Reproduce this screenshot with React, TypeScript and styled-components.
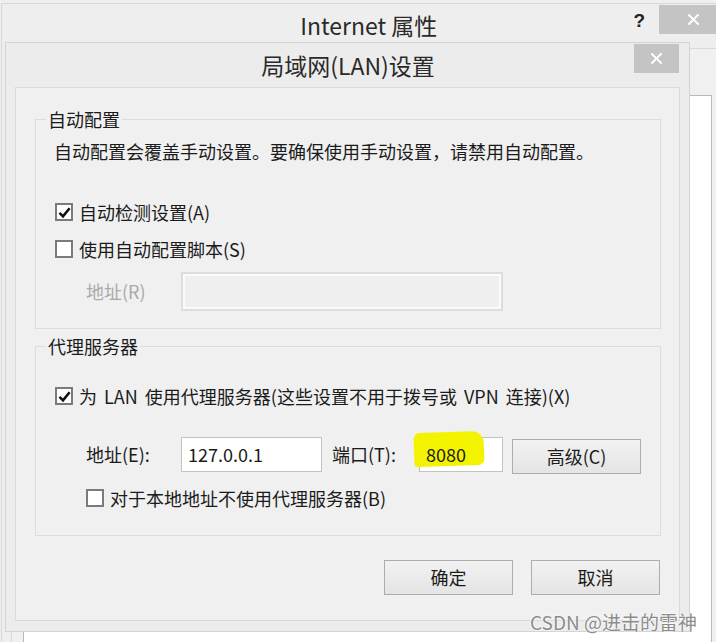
import React from 'react';
import styled, { createGlobalStyle } from 'styled-components';

const GlobalStyle = createGlobalStyle`
  html, body {
    margin: 0;
    padding: 0;
    width: 716px;
    height: 642px;
    overflow: hidden;
    background: #efefef;
  }
  body {
    font-family: "Noto Sans CJK SC", "Noto Sans", sans-serif;
    color: #1b1b1b;
    word-spacing: 3px;
  }
`;

const Page = styled.div`
  position: relative;
  width: 716px;
  height: 642px;
  overflow: hidden;
  background: #efefef;
`;

// ---- outer window (Internet 属性) ----

const OuterWindow = styled.div`
  display: flex;
  flex-direction: column;
  height: 639px;
  margin: 3px 0 0 1px;
  border-top: 1px solid #d8d8d8;
  border-left: 1px solid #d8d8d8;
  background: #eeeeee;
`;

const OuterTitleBar = styled.div`
  display: flex;
  align-items: flex-start;
  height: 44px;
`;

const WindowTitle = styled.div<{ $size: number; $padLeft: number; $line: number }>`
  flex: 1;
  padding-left: ${(p) => p.$padLeft}px;
  text-align: center;
  line-height: ${(p) => p.$line}px;
  font-size: ${(p) => p.$size}px;
  color: #2a2a2a;
  white-space: nowrap;
  word-spacing: 0;
`;

const HelpMark = styled.div`
  margin: 6px 14px 0 0;
  line-height: 22px;
  font-family: "Liberation Sans", sans-serif;
  font-weight: bold;
  font-size: 19px;
  color: #222;
`;

const CloseButton = styled.div<{ $width: number; $padLeft: number }>`
  display: flex;
  align-items: center;
  justify-content: ${(p) => (p.$padLeft ? 'flex-start' : 'center')};
  padding-left: ${(p) => p.$padLeft}px;
  box-sizing: border-box;
  width: ${(p) => p.$width}px;
  height: 29px;
  margin-top: 1px;
  background: #c4c4c4;
`;

const OuterBody = styled.div`
  flex: 1;
  display: flex;
  padding-left: 9px;
`;

const TabPanel = styled.div`
  flex: 1;
  display: flex;
  padding: 46px 0 0 11px;
  border-top: 1px solid #d9d9d9;
  border-left: 1px solid #d9d9d9;
  background: #f0f0f0;
`;

const ListArea = styled.div`
  width: 687px;
  border: 1px solid #b9b9b9;
  border-bottom: none;
  background: #fff;
`;

// ---- LAN dialog ----

const Dialog = styled.div`
  position: absolute;
  left: 5px;
  top: 42px;
  width: 683px;
  height: 588px;
  display: flex;
  flex-direction: column;
  border: 1px solid #d3d3d3;
  background: #ececec;
`;

const DialogTitleBar = styled.div`
  display: flex;
  align-items: flex-start;
  height: 44px;
  padding-right: 10px;
`;

const ContentFrame = styled.div`
  flex: 1;
  display: flex;
  flex-direction: column;
  margin: 0 9px 10px 9px;
  padding: 20px 18px 0 19px;
  border: 1px solid #dadada;
  background: #f0f0f0;
`;

const GroupBox = styled.fieldset<{ $gapTop: number; $padTop: number; $padBottom: number }>`
  margin: ${(p) => p.$gapTop}px 0 0 0;
  padding: ${(p) => p.$padTop}px 0 ${(p) => p.$padBottom}px 19px;
  border: 1px solid #dcdcdc;
  min-width: 0;
`;

const GroupLegend = styled.legend`
  margin-left: -9px;
  padding: 0 2px;
  line-height: 22px;
  font-size: 18px;
`;

const Description = styled.div`
  line-height: 22px;
  font-size: 18px;
  margin-left: -1px;
  white-space: nowrap;
`;

const Row = styled.div<{ $top: number; $indent?: number }>`
  display: flex;
  align-items: center;
  margin-top: ${(p) => p.$top}px;
  padding-left: ${(p) => p.$indent ?? 0}px;
  line-height: 22px;
  font-size: 18px;
  white-space: nowrap;
`;

const FieldRow = styled.div<{ $top: number }>`
  display: flex;
  align-items: flex-start;
  margin-top: ${(p) => p.$top}px;
  padding-left: 31px;
  font-size: 18px;
  white-space: nowrap;
`;

const CheckBox = styled.span`
  display: inline-flex;
  align-items: center;
  justify-content: center;
  box-sizing: border-box;
  width: 18px;
  height: 18px;
  margin-right: 6px;
  border: 2px solid #7b7b7b;
  background: #fff;
`;

const FieldLabel = styled.span<{ $width: number; $disabled?: boolean; $height: number; $padLeft?: number }>`
  box-sizing: border-box;
  width: ${(p) => p.$width}px;
  padding-left: ${(p) => p.$padLeft ?? 0}px;
  line-height: ${(p) => p.$height}px;
  color: ${(p) => (p.$disabled ? '#a9a9a9' : '#1b1b1b')};
`;

const DisabledInput = styled.div`
  box-sizing: border-box;
  width: 322px;
  height: 39px;
  border: 2px solid #dddddd;
  box-shadow: inset 0 0 0 2px #fbfbfb;
  background: #efefef;
`;

const TextInput = styled.div<{ $width: number }>`
  position: relative;
  box-sizing: border-box;
  width: ${(p) => p.$width}px;
  height: 35px;
  padding-left: 6px;
  border: 1px solid #c2c2c2;
  background: #fff;
  line-height: 33px;
  font-size: 18px;
`;

const Marker = styled.span`
  position: absolute;
  left: -6px;
  top: -6px;
  width: 70px;
  height: 34px;
  border-radius: 6px 12px 6px 4px;
  background: #f3f300;
  transform: rotate(-2deg);
`;

const MarkedText = styled.span`
  position: relative;
`;

const PushButton = styled.div<{ $top?: number; $left?: number }>`
  box-sizing: border-box;
  width: 129px;
  height: 35px;
  margin: ${(p) => p.$top ?? 0}px 0 0 ${(p) => p.$left ?? 0}px;
  border: 1px solid #adadad;
  background: linear-gradient(#f2f2f2, #e4e4e4);
  text-align: center;
  line-height: 33px;
  font-size: 18px;
`;

const ButtonBar = styled.div`
  display: flex;
  justify-content: flex-end;
  gap: 18px;
  margin-top: 24px;
  padding-right: 1px;
`;

const Watermark = styled.div`
  position: absolute;
  left: 530px;
  top: 609px;
  font-size: 19px;
  line-height: 26px;
  word-spacing: 0;
  color: #8c8c8c;
  text-shadow: 0 0 2px #fff, 0 0 2px #fff;
  white-space: nowrap;
`;

function CrossIcon ({ size }: { size: number }) {
  return (
    <svg width={size} height={size} viewBox='0 0 10 10'>
      <path d='M1 1 L9 9 M9 1 L1 9' stroke='#fff' strokeWidth='1.8' strokeLinecap='square' />
    </svg>
  );
}

function Check ({ checked }: { checked?: boolean }) {
  return (
    <CheckBox>
      {checked && (
        <svg width='13' height='13' viewBox='0 0 13 13'>
          <path d='M1.5 6.8 L5 10.3 L11.6 2.2' fill='none' stroke='#111' strokeWidth='2.6' />
        </svg>
      )}
    </CheckBox>
  );
}

export default function App () {
  return (
    <Page>
      <GlobalStyle />
      <OuterWindow>
        <OuterTitleBar>
          <WindowTitle $size={23} $padLeft={102} $line={42}>Internet 属性</WindowTitle>
          <HelpMark>?</HelpMark>
          <CloseButton $width={57} $padLeft={29}><CrossIcon size={11} /></CloseButton>
        </OuterTitleBar>
        <OuterBody>
          <TabPanel>
            <ListArea />
          </TabPanel>
        </OuterBody>
      </OuterWindow>

      <Dialog>
        <DialogTitleBar>
          <WindowTitle $size={23} $padLeft={56} $line={44}>局域网(LAN)设置</WindowTitle>
          <CloseButton $width={45} $padLeft={0}><CrossIcon size={11} /></CloseButton>
        </DialogTitleBar>
        <ContentFrame>
          <GroupBox $gapTop={0} $padTop={10} $padBottom={17}>
            <GroupLegend>自动配置</GroupLegend>
            <Description>自动配置会覆盖手动设置。要确保使用手动设置，请禁用自动配置。</Description>
            <Row $top={39}><Check checked />自动检测设置(A)</Row>
            <Row $top={15}><Check />使用自动配置脚本(S)</Row>
            <FieldRow $top={12}>
              <FieldLabel $width={95} $height={39} $disabled>地址(R)</FieldLabel>
              <DisabledInput />
            </FieldRow>
          </GroupBox>

          <GroupBox $gapTop={6} $padTop={28} $padBottom={26}>
            <GroupLegend>代理服务器</GroupLegend>
            <Row $top={0}><Check checked />为 LAN 使用代理服务器(这些设置不用于拨号或 VPN 连接)(X)</Row>
            <FieldRow $top={30}>
              <FieldLabel $width={95} $height={35}>地址(E):</FieldLabel>
              <TextInput $width={141}>127.0.0.1</TextInput>
              <FieldLabel $width={97} $height={35} $padLeft={10}>端口(T):</FieldLabel>
              <TextInput $width={84}>
                <Marker />
                <MarkedText>8080</MarkedText>
              </TextInput>
              <PushButton $top={2} $left={9}>高级(C)</PushButton>
            </FieldRow>
            <Row $top={13} $indent={31}><Check />对于本地地址不使用代理服务器(B)</Row>
          </GroupBox>

          <ButtonBar>
            <PushButton>确定</PushButton>
            <PushButton>取消</PushButton>
          </ButtonBar>
        </ContentFrame>
      </Dialog>

      <Watermark>CSDN @进击的雷神</Watermark>
    </Page>
  );
}
